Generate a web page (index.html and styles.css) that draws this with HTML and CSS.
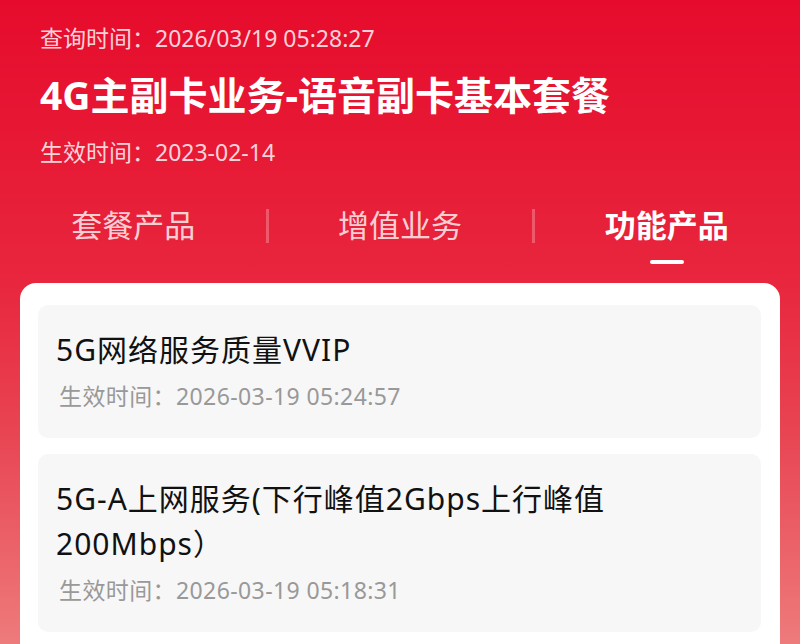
FILE: index.html
```html
<!DOCTYPE html>
<html lang="zh-CN">
<head>
<meta charset="utf-8">
<title>功能产品</title>
<link rel="stylesheet" href="styles.css">
</head>
<body>
<div class="page">
  <header class="head">
    <div class="query">查询时间：2026/03/19 05:28:27</div>
    <h1 class="title">4G主副卡业务-语音副卡基本套餐</h1>
    <div class="eff">生效时间：2023-02-14</div>
  </header>
  <nav class="tabs">
    <div class="tab">套餐产品</div>
    <div class="tab">增值业务</div>
    <div class="tab active">功能产品</div>
  </nav>
  <main class="card">
    <div class="item">
      <div class="item-title">5G网络服务质量VVIP</div>
      <div class="item-meta">生效时间：2026-03-19 05:24:57</div>
    </div>
    <div class="item">
      <div class="item-title">5G-A上网服务(下行峰值2Gbps上行峰值<br>200Mbps）</div>
      <div class="item-meta">生效时间：2026-03-19 05:18:31</div>
    </div>
  </main>
</div>
</body>
</html>
```
FILE: styles.css
```css
html, body {
  margin: 0;
  padding: 0;
}
body {
  width: 800px;
  height: 644px;
  overflow: hidden;
  font-family: "Noto Sans", "Noto Sans CJK SC", sans-serif;
  background: linear-gradient(180deg, #e60b2c 0px, #e8263d 280px, #e84452 430px, #ee7b7b 644px);
}
.page {
  display: flex;
  flex-direction: column;
}
.head {
  padding: 22px 40px 0 40px;
  color: #fff;
}
.query {
  font-size: 23px;
  line-height: 32px;
  color: rgba(255, 255, 255, 0.82);
}
.title {
  margin: 13px 0 0 0;
  font-size: 39px;
  line-height: 56px;
  font-weight: 700;
  color: #fff;
}
.eff {
  margin-top: 13px;
  font-size: 23px;
  line-height: 32px;
  color: rgba(255, 255, 255, 0.82);
}
.tabs {
  display: grid;
  grid-template-columns: 1fr 1fr 1fr;
  margin-top: 32px;
  height: 83px;
}
.tab {
  position: relative;
  text-align: center;
  font-size: 31px;
  line-height: 50px;
  height: 50px;
  color: rgba(255, 255, 255, 0.8);
}
.tab + .tab::before {
  content: "";
  position: absolute;
  left: -1px;
  top: 9px;
  width: 3px;
  height: 34px;
  background: rgba(255, 255, 255, 0.25);
}
.tab.active {
  color: #fff;
  font-weight: 700;
}
.tab.active::after {
  content: "";
  position: absolute;
  left: 50%;
  top: 60px;
  width: 34px;
  height: 4px;
  margin-left: -17px;
  border-radius: 2px;
  background: #fff;
}
.card {
  margin: 0 20px;
  background: #fff;
  border-radius: 16px;
  padding: 22px 19px 30px 18px;
  display: flex;
  flex-direction: column;
  gap: 16px;
  min-height: 400px;
}
.item {
  background: #f7f7f7;
  border-radius: 10px;
  padding: 22px 18px 25px 18px;
}
.item-title {
  font-size: 30px;
  line-height: 45px;
  letter-spacing: 1px;
  color: #111;
}
.item-meta {
  margin-top: 7px;
  padding-left: 3px;
  font-size: 23px;
  line-height: 34px;
  letter-spacing: 0.4px;
  color: #999;
}
```
